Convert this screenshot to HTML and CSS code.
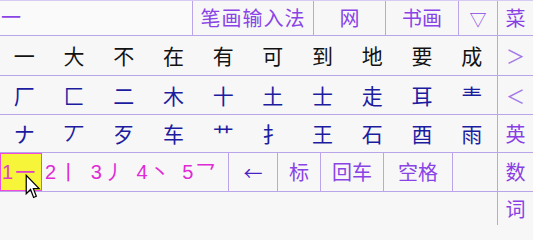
FILE: index.html
```html
<!DOCTYPE html>
<html lang="zh-CN">
<head>
<meta charset="utf-8">
<title>笔画输入法</title>
<link rel="stylesheet" href="styles.css">
</head>
<body>
<div class="board">
  <div class="row r1">
    <div class="cell c-pre"><span class="pre">一</span></div>
    <div class="cell c-bihua tab">笔画输入法</div>
    <div class="cell c-wang tab">网</div>
    <div class="cell c-shuhua tab">书画</div>
    <div class="cell c-tri tab">▽</div>
    <div class="side">菜</div>
  </div>
  <div class="row r2">
    <div class="cell chars black">
      <span>一</span><span>大</span><span>不</span><span>在</span><span>有</span><span>可</span><span>到</span><span>地</span><span>要</span><span>成</span>
    </div>
    <div class="side thin">＞</div>
  </div>
  <div class="row r3">
    <div class="cell chars blue">
      <span>厂</span><span>匚</span><span>二</span><span>木</span><span>十</span><span>土</span><span>士</span><span>走</span><span>耳</span><span>龶</span>
    </div>
    <div class="side thin">＜</div>
  </div>
  <div class="row r4">
    <div class="cell chars blue">
      <span>ナ</span><span>丆</span><span>歹</span><span>车</span><span>艹</span><span>扌</span><span>王</span><span>石</span><span>酉</span><span>雨</span>
    </div>
    <div class="side">英</div>
  </div>
  <div class="row r5">
    <div class="cell c-sel"><span class="num">1</span><span class="stk">一</span></div>
    <div class="cell c-strokes">
      <span class="sk"><span class="num">2</span><span class="stk">丨</span></span>
      <span class="sk"><span class="num">3</span><span class="stk">丿</span></span>
      <span class="sk"><span class="num">4</span><span class="stk">丶</span></span>
      <span class="sk"><span class="num">5</span><span class="stk">乛</span></span>
    </div>
    <div class="cell c-back arrow">←</div>
    <div class="cell c-biao tab">标</div>
    <div class="cell c-enter tab">回车</div>
    <div class="cell c-space tab">空格</div>
    <div class="cell c-empty"></div>
    <div class="side">数</div>
  </div>
  <div class="row r6">
    <div class="cell c-blank"></div>
    <div class="side">词</div>
  </div>
  <svg class="cursor" width="16" height="26" viewBox="0 0 13 21">
    <path d="M1 1 L1 16 L4.5 12.5 L7 19 L9.2 18 L6.8 11.8 L11.5 11.8 Z" fill="#fff" stroke="#000" stroke-width="1" stroke-linejoin="miter"/>
  </svg>
</div>
</body>
</html>
```
FILE: styles.css
```css
html, body {
  margin: 0;
  padding: 0;
  background: #f7f7f8;
}
.board {
  position: relative;
  width: 533px;
  height: 225px;
  overflow: hidden;
  background: #f7f7f8;
  font-family: "Noto Sans CJK SC", "Noto Sans", sans-serif;
  font-size: 20px;
  line-height: 1;
}
.row {
  display: flex;
  box-sizing: border-box;
  border-bottom: 1px solid #b9a6ea;
}
.r1 { height: 36px; border-top: 1px solid #d6cbf3; }
.r2 { height: 40px; }
.r3 { height: 39px; }
.r4 { height: 38px; }
.r5 { height: 39px; }
.r6 { height: 33px; border-bottom: none; }
.cell {
  box-sizing: border-box;
  border-right: 1px solid #b9a6ea;
  display: flex;
  align-items: center;
  justify-content: center;
  flex: none;
}
.side {
  flex: 1;
  display: flex;
  align-items: center;
  justify-content: center;
  color: #8a3fe4;
  font-size: 20px;
}
.side.thin {
  color: #a47ae8;
  font-size: 19px;
}
.tab { color: #8a44e6; }
.c-pre { width: 193px; justify-content: flex-start; background: #fafafa; padding-left: 1px; }
.pre { color: #8a44e6; margin-top: -2px; }
.c-bihua { width: 121px; letter-spacing: 1px; }
.c-wang { width: 72px; }
.c-shuhua { width: 73px; }
.c-tri { width: 39px; font-size: 17px; }
.chars {
  width: 498px;
  display: grid;
  grid-template-columns: repeat(10, 1fr);
  align-items: center;
  justify-items: center;
  font-size: 21px;
}
.chars span { margin-left: -1px; }
.black { color: #121212; }
.blue { color: #1c1ca0; }
.c-sel {
  width: 42px;
  background: #f7f53a;
  border: 1px solid #f04ad8;
  justify-content: flex-start;
  padding-left: 1px;
}
.num {
  font-family: "Liberation Sans", sans-serif;
  font-size: 20px;
  color: #e02ad4;
}
.stk {
  color: #e02ad4;
  font-size: 20px;
  margin-left: 2px;
}
.c-sel .stk { color: #e040c8; }
.c-sel .num { color: #e040c8; }
.c-strokes {
  width: 187px;
  justify-content: flex-start;
  padding-left: 3px;
}
.sk {
  width: 50px;
  display: flex;
  align-items: center;
}
.c-back { width: 49px; }
.arrow { color: #4a22c4; font-size: 19px; }
.c-biao { width: 43px; }
.c-enter { width: 63px; }
.c-space { width: 69px; }
.c-empty { width: 45px; }
.c-blank { width: 498px; }
.cursor {
  position: absolute;
  left: 25px;
  top: 174px;
}
```
